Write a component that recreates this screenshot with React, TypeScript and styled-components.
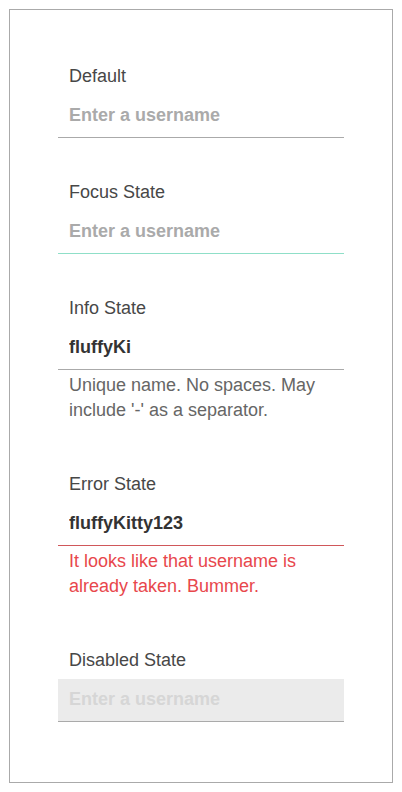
import styled, { createGlobalStyle, css } from "styled-components";

type Variant = "default" | "focus" | "info" | "error" | "disabled";

const GlobalStyle = createGlobalStyle`
  html, body {
    margin: 0;
    padding: 0;
    background: #ffffff;
  }
  body {
    padding: 9px;
    font-family: "Liberation Sans", Arial, sans-serif;
  }
  * {
    box-sizing: border-box;
  }
`;

const Frame = styled.div`
  height: 774px;
  border: 1px solid #aaaaaa;
  padding: 56px 48px 0;
  display: flex;
  flex-direction: column;
`;

const Field = styled.div`
  display: flex;
  flex-direction: column;
  margin-bottom: 44px;
`;

const Label = styled.label`
  font-size: 18px;
  line-height: 21px;
  color: #474747;
  padding-left: 11px;
  margin-bottom: 8px;
`;

const lineColor = (v: Variant) => {
  if (v === "focus") return "#8fdfc8";
  if (v === "error") return "#d0575a";
  return "#aaaaaa";
};

const Input = styled.input<{ $variant: Variant }>`
  height: 43px;
  width: 100%;
  border: none;
  border-bottom: 1px solid ${(p) => lineColor(p.$variant)};
  outline: none;
  background: transparent;
  padding: 9px 11px 11px;
  font-family: "Liberation Sans", Arial, sans-serif;
  font-size: 18px;
  font-weight: 700;
  line-height: 22px;
  color: #333333;

  &::placeholder {
    color: #aaaaaa;
    opacity: 1;
  }

  ${(p) =>
    p.$variant === "disabled" &&
    css`
      background: #ebebeb;
      &::placeholder {
        color: #d6d6d6;
      }
    `}
`;

const Helper = styled.p<{ $error?: boolean }>`
  margin: 3px 0 7px;
  padding: 0 11px;
  font-size: 18px;
  line-height: 25px;
  color: ${(p) => (p.$error ? "#e8474c" : "#666666")};
`;

const fields: {
  label: string;
  variant: Variant;
  value?: string;
  helper?: string;
}[] = [
  { label: "Default", variant: "default" },
  { label: "Focus State", variant: "focus" },
  {
    label: "Info State",
    variant: "info",
    value: "fluffyKi",
    helper: "Unique name. No spaces. May include '-' as a separator.",
  },
  {
    label: "Error State",
    variant: "error",
    value: "fluffyKitty123",
    helper: "It looks like that username is already taken. Bummer.",
  },
  { label: "Disabled State", variant: "disabled" },
];

const App = () => {
  return (
    <>
      <GlobalStyle />
      <Frame>
        {fields.map((f) => (
          <Field key={f.label}>
            <Label>{f.label}</Label>
            <Input
              $variant={f.variant}
              placeholder="Enter a username"
              defaultValue={f.value}
              disabled={f.variant === "disabled"}
            />
            {f.helper && (
              <Helper $error={f.variant === "error"}>{f.helper}</Helper>
            )}
          </Field>
        ))}
      </Frame>
    </>
  );
};

export default App;
